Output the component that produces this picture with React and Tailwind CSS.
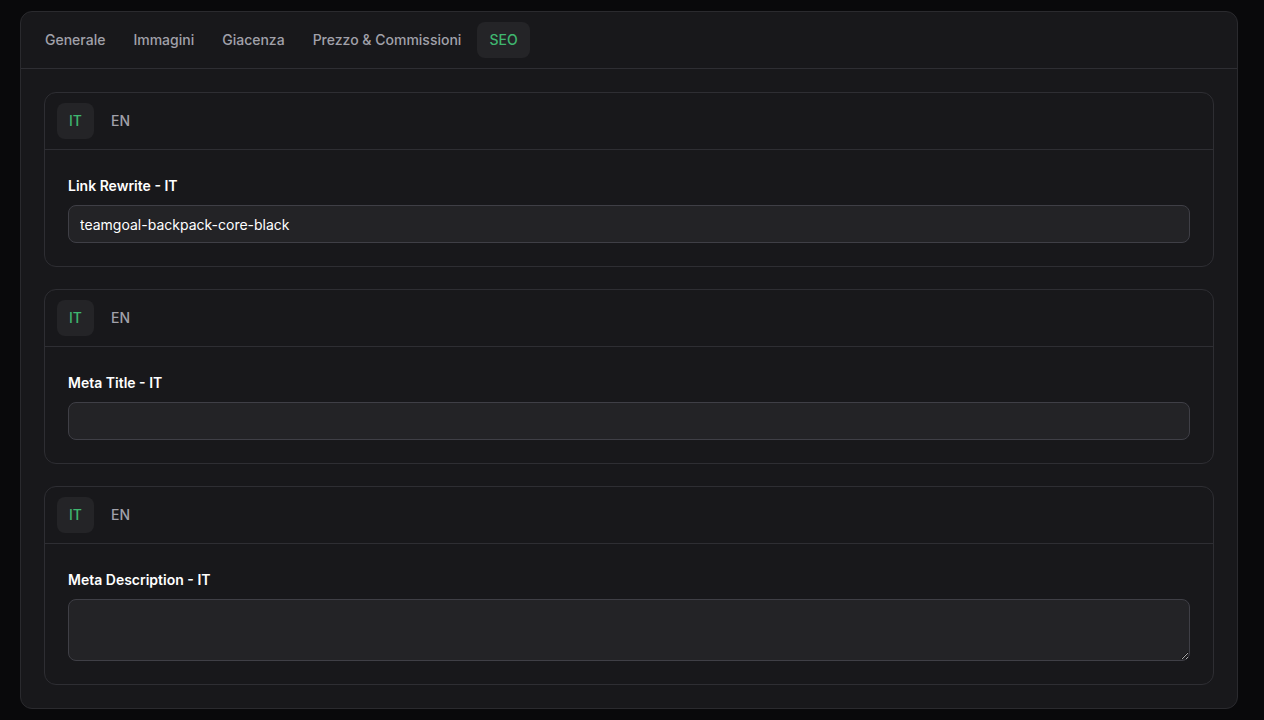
import React, { useState } from 'react';

const tabs = ['Generale', 'Immagini', 'Giacenza', 'Prezzo & Commissioni', 'SEO'];

const LangField = ({ label, value, multiline }) => {
  const [lang, setLang] = useState('IT');

  return (
    <section className="bg-[#18181b] border border-[#2e2e33] rounded-xl">
      <div className="flex items-center gap-[5px] px-3 py-2.5 border-b border-[#2e2e33]">
        {['IT', 'EN'].map(l => (
          <button
            key={l}
            onClick={() => setLang(l)}
            className={`h-9 px-3 rounded-lg text-sm font-medium ${
              lang === l ? 'bg-[#242427] text-[#3fb66f]' : 'text-[#a1a1aa]'
            }`}
          >
            {l}
          </button>
        ))}
      </div>
      <div className="px-[23px] pt-6 pb-[23px]">
        <label className="block text-sm font-semibold text-white leading-6 mb-[7px]">
          {label} - {lang}
        </label>
        {multiline ? (
          <textarea
            defaultValue={value}
            className="block w-full h-[62px] rounded-lg bg-[#232326] border border-[#3f3f46] px-[11px] py-2 text-sm text-white outline-none"
          />
        ) : (
          <input
            defaultValue={value}
            className="block w-full h-[38px] rounded-lg bg-[#232326] border border-[#3f3f46] px-[11px] text-sm text-white outline-none"
          />
        )}
      </div>
    </section>
  );
};

const App = () => {
  const [active, setActive] = useState('SEO');

  return (
    <div className="min-h-screen bg-[#09090b] pl-5 pr-[26px] pt-[11px] pb-3" style={{ fontFamily: 'Inter, "Noto Sans", sans-serif' }}>
      <div className="bg-[#18181b] border border-[#2a2a2e] rounded-xl">
        {/* Tabs */}
        <div className="flex items-center gap-1 px-3 py-2.5 border-b border-[#2e2e33]">
          {tabs.map(t => (
            <button
              key={t}
              onClick={() => setActive(t)}
              className={`h-9 px-3 rounded-lg text-sm font-medium ${
                active === t ? 'bg-[#242427] text-[#3fb66f]' : 'text-[#a1a1aa]'
              }`}
            >
              {t}
            </button>
          ))}
        </div>

        <div className="px-[23px] pt-[23px] pb-[23px] flex flex-col gap-[22px]">
          <LangField label="Link Rewrite" value="teamgoal-backpack-core-black" />
          <LangField label="Meta Title" value="" />
          <LangField label="Meta Description" value="" multiline />
        </div>
      </div>
    </div>
  );
};

export default App;
